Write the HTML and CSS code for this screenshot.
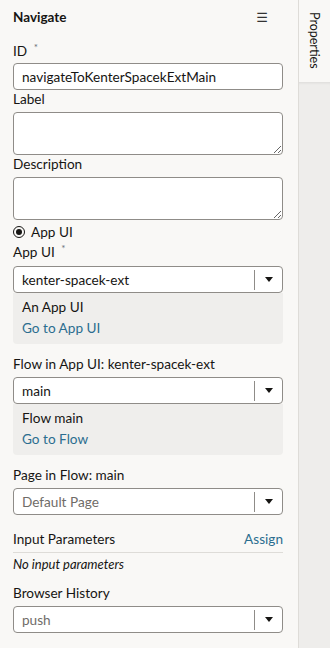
FILE: index.html
```html
<!DOCTYPE html>
<html>
<head>
<meta charset="utf-8">
<link rel="stylesheet" href="styles.css">
</head>
<body>
<div class="app">
  <div class="panel">
    <div class="header">
      <span class="title">Navigate</span>
      <span class="menu">☰</span>
    </div>
    <div class="label first">ID <span class="req">*</span></div>
    <div class="input">navigateToKenterSpacekExtMain</div>
    <div class="label tight">Label</div>
    <textarea class="ta"></textarea>
    <div class="label tight">Description</div>
    <textarea class="ta"></textarea>
    <div class="radio-row"><span class="radio"></span><span>App UI</span></div>
    <div class="label after-radio">App UI <span class="req">*</span></div>
    <div class="select"><span class="val">kenter-spacek-ext</span><span class="btn"><span class="tri"></span></span></div>
    <div class="info">
      <div>An App UI</div>
      <div class="link">Go to App UI</div>
    </div>
    <div class="label sec">Flow in App UI: kenter-spacek-ext</div>
    <div class="select"><span class="val">main</span><span class="btn"><span class="tri"></span></span></div>
    <div class="info">
      <div>Flow main</div>
      <div class="link">Go to Flow</div>
    </div>
    <div class="label sec">Page in Flow: main</div>
    <div class="select"><span class="val ph">Default Page</span><span class="btn"><span class="tri"></span></span></div>
    <div class="params">
      <span>Input Parameters</span>
      <span class="link">Assign</span>
    </div>
    <div class="none">No input parameters</div>
    <div class="label sec">Browser History</div>
    <div class="select"><span class="val ph">push</span><span class="btn"><span class="tri"></span></span></div>
  </div>
  <div class="side">
    <div class="tab"><span class="tabtext">Properties</span></div>
    <div class="rest"></div>
  </div>
</div>
</body>
</html>
```
FILE: styles.css
```css
* { box-sizing: border-box; }
html, body { margin: 0; padding: 0; }
body {
  font-family: Lato, "Noto Sans", sans-serif;
  font-size: 13.6px;
  color: #161513;
  background: #f9f8f6;
}
.app { display: flex; width: 330px; height: 648px; overflow: hidden; }
.panel {
  width: 299px;
  flex: none;
  padding: 0 16px 0 13px;
  background: #f9f8f6;
  border-right: 1px solid #dedcd8;
}
.header {
  display: flex;
  justify-content: space-between;
  align-items: center;
  height: 34px;
}
.title { font-weight: 700; font-size: 13.5px; }
.menu { font-size: 13px; margin-right: 14px; color: #333; font-family: "DejaVu Sans", sans-serif; }
.label { line-height: 18px; height: 18px; }
.label.first { margin-top: 8px; margin-bottom: 3px; }
.label.tight { line-height: 16px; height: 16px; margin-top: 1px; margin-bottom: 5px; }
.label.after-radio { margin-top: 0; margin-bottom: 5px; }
.label.sec { margin-top: 11px; margin-bottom: 4px; }
.req { font-size: 10px; vertical-align: top; position: relative; top: -4px; color: #6a6f78; margin-left: 3px; }
.input, .select {
  width: 270px;
  height: 27px;
  border: 1px solid #8f8c88;
  border-radius: 4px;
  background: #fff;
  display: flex;
  align-items: center;
  padding-left: 8px;
}
.ta {
  display: block;
  width: 270px;
  height: 43px;
  border: 1px solid #8f8c88;
  border-radius: 4px;
  background: #fff;
  resize: vertical;
  margin: 0;
  font: inherit;
}
.radio-row {
  display: flex;
  align-items: center;
  gap: 6px;
  height: 22px;
  margin-top: 1px;
}
.radio {
  width: 12px;
  height: 12px;
  border: 1.5px solid #161513;
  border-radius: 50%;
  display: inline-flex;
  align-items: center;
  justify-content: center;
}
.radio::after {
  content: "";
  width: 6px;
  height: 6px;
  border-radius: 50%;
  background: #161513;
}
.val { flex: 1; }
.ph { color: #6f6c68; }
.btn {
  width: 28px;
  height: 20px;
  border-left: 1px solid #8f8c88;
  display: flex;
  align-items: center;
  justify-content: center;
}
.tri {
  width: 0; height: 0;
  border-left: 4px solid transparent;
  border-right: 4px solid transparent;
  border-top: 5px solid #161513;
}
.info {
  width: 270px;
  height: 51px;
  background: #efeeec;
  border-radius: 0 0 4px 4px;
  padding: 4px 9px 5px;
  line-height: 21px;
}
.link { color: #2b6d8f; }
.params {
  width: 270px;
  display: flex;
  justify-content: space-between;
  margin-top: 15px;
  padding-bottom: 4px;
  border-bottom: 1px solid #dedcd8;
  line-height: 18px;
}
.none { font-style: italic; font-size: 13px; margin-top: 2px; line-height: 18px; }
.side { flex: 1; display: flex; flex-direction: column; }
.tab {
  height: 82px;
  background: #f9f8f6;
  position: relative;
}
.tabtext {
  position: absolute;
  left: 8px;
  top: 12px;
  writing-mode: vertical-rl;
  font-size: 12.5px;
  color: #161513;
}
.rest { flex: 1; background: #eeedeb; box-shadow: inset 0 3px 3px -2px rgba(0,0,0,0.08); }
```
